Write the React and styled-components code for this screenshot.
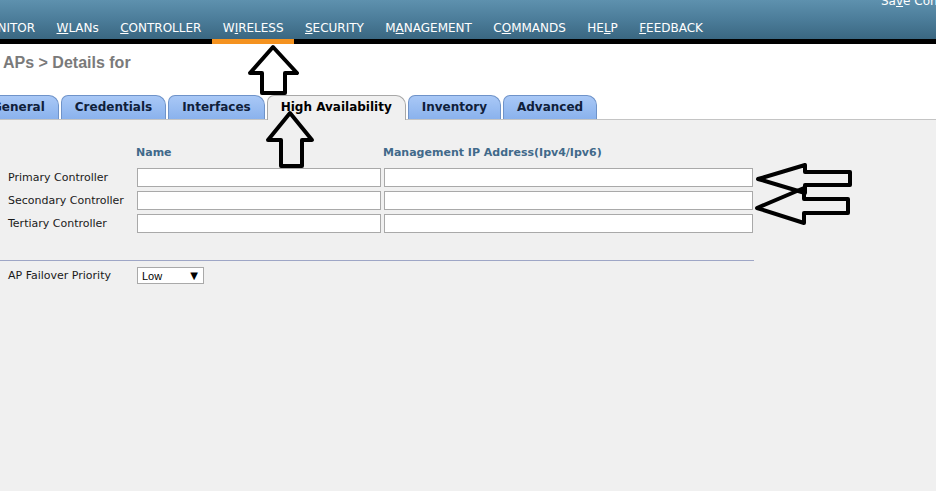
import React from "react";
import styled, { createGlobalStyle } from "styled-components";

const Global = createGlobalStyle`
  html, body { margin: 0; padding: 0; }
  body {
    background: #f0f0f0;
    font-family: "DejaVu Sans", Verdana, sans-serif;
    overflow: hidden;
  }
`;

const Page = styled.div`
  position: relative;
  width: 936px;
  height: 491px;
  overflow: hidden;
  display: flex;
  flex-direction: column;
  background: #f0f0f0;
`;

const Header = styled.header`
  height: 44px;
  flex: none;
  display: flex;
  flex-direction: column;
  overflow: hidden;
  background: linear-gradient(
    to bottom,
    #5e91ae 0px,
    #4b7c99 20px,
    #3a6781 39px,
    #000 39px,
    #000 44px
  );
`;

const TopLinks = styled.div`
  height: 7px;
  flex: none;
  display: flex;
  align-items: flex-end;
  padding-left: 881px;
  white-space: nowrap;
  overflow: hidden;
  color: #fff;
  font-size: 12px;
  line-height: 12px;
`;

const Nav = styled.nav`
  display: flex;
  margin-left: -33px;
  white-space: nowrap;
`;

const NavItem = styled.div`
  height: 37px;
  box-sizing: border-box;
  padding: 15px 10.7px 0;
  font-size: 12px;
  line-height: 12px;
  color: #fff;
  border-bottom: 5px solid ${(p) => (p.$active ? "#f4921f" : "transparent")};
  u { text-underline-offset: 1px; }
`;

const TopSection = styled.section`
  background: #fff;
  flex: none;
  display: flex;
  flex-direction: column;
`;

const Title = styled.h1`
  margin: 0;
  height: 51px;
  box-sizing: border-box;
  padding: 9px 0 0 3px;
  font-family: "Liberation Sans", Arial, sans-serif;
  font-weight: bold;
  font-size: 16px;
  line-height: 20px;
  color: #7a7a7a;
`;

const TabRow = styled.div`
  display: flex;
  align-items: flex-end;
  gap: 2px;
  height: 24px;
  margin-left: -22px;
  border-bottom: 1px solid #c4c4c4;
  background: #fff;
`;

const Tab = styled.div`
  height: ${(p) => (p.$active ? "25px" : "24px")};
  margin-bottom: ${(p) => (p.$active ? "-1px" : "0")};
  box-sizing: border-box;
  padding: 0 13px;
  border: 1px solid ${(p) => (p.$active ? "#a8a8a8" : "#6f93c9")};
  border-bottom: none;
  border-radius: 7px 10px 0 0;
  background: ${(p) =>
    p.$active ? "#f0f0f0" : "linear-gradient(to bottom, #a9c8f6, #8ab2ed)"};
  font-weight: bold;
  font-size: 12px;
  line-height: 22px;
  color: ${(p) => (p.$active ? "#000" : "#10203a")};
  white-space: nowrap;
`;

const Content = styled.main`
  flex: 1;
  background: #f0f0f0;
  padding-top: 26px;
`;

const FormGrid = styled.div`
  display: grid;
  grid-template-columns: 129px 247px 369px;
  row-gap: 4px;
  align-items: center;
  padding-left: 8px;
`;

const ColHead = styled.div`
  font-weight: bold;
  font-size: 11px;
  line-height: 14px;
  color: #41698a;
  margin-left: -1px;
  margin-bottom: 4px;
  white-space: nowrap;
`;

const Label = styled.div`
  font-size: 11px;
  line-height: 14px;
  color: #1a1a1a;
  white-space: nowrap;
`;

const TextBox = styled.div`
  width: ${(p) => p.$w}px;
  height: 19px;
  box-sizing: border-box;
  border: 1px solid #a9a9a9;
  background: #fff;
`;

const Divider = styled.hr`
  width: 754px;
  margin: 27px 0 0 0;
  border: none;
  border-top: 1px solid #9ea6c6;
  height: 0;
`;

const FieldRow = styled.div`
  display: flex;
  align-items: center;
  margin-top: 6px;
  padding-left: 8px;
`;

const FieldLabel = styled(Label)`
  width: 129px;
`;

const Select = styled.div`
  width: 67px;
  height: 17px;
  box-sizing: border-box;
  border: 1px solid #a9a9a9;
  background: #fff;
  display: flex;
  align-items: center;
  justify-content: space-between;
  padding: 0 5px 0 4px;
  font-family: "Liberation Sans", Arial, sans-serif;
  font-size: 11px;
  color: #000;
`;

const Caret = styled.span`
  font-family: "DejaVu Sans", sans-serif;
  font-size: 10px;
  line-height: 10px;
`;

const Overlay = styled.svg`
  position: absolute;
  top: 0;
  left: 0;
  pointer-events: none;
`;

const navItems = [
  { pre: "", u: "M", post: "ONITOR" },
  { pre: "", u: "W", post: "LANs" },
  { pre: "", u: "C", post: "ONTROLLER" },
  { pre: "W", u: "I", post: "RELESS", active: true },
  { pre: "", u: "S", post: "ECURITY" },
  { pre: "M", u: "A", post: "NAGEMENT" },
  { pre: "C", u: "O", post: "MMANDS" },
  { pre: "HE", u: "L", post: "P" },
  { pre: "", u: "F", post: "EEDBACK" },
];

const tabs = [
  "General",
  "Credentials",
  "Interfaces",
  "High Availability",
  "Inventory",
  "Advanced",
];

const rows = ["Primary Controller", "Secondary Controller", "Tertiary Controller"];

const arrows = [
  "273,47 297,73 285,73 285,93 262,93 262,73 250,73",
  "290,113 312,140 302,140 302,166 281,166 281,140 268,140",
  "758,179 805,165 805,172 850,172 850,185 805,185 805,193",
  "757,208 804,188 804,199 848,199 848,213 804,213 804,223",
];

export default function App() {
  return (
    <Page>
      <Global />
      <Header>
        <TopLinks>
          <span>
            Sa<u>v</u>e Configuration
          </span>
        </TopLinks>
        <Nav>
          {navItems.map((n, i) => (
            <NavItem key={i} $active={n.active}>
              {n.pre}
              <u>{n.u}</u>
              {n.post}
            </NavItem>
          ))}
        </Nav>
      </Header>
      <TopSection>
        <Title>APs &gt; Details for</Title>
        <TabRow>
          {tabs.map((t) => (
            <Tab key={t} $active={t === "High Availability"}>
              {t}
            </Tab>
          ))}
        </TabRow>
      </TopSection>
      <Content>
        <FormGrid>
          <span />
          <ColHead>Name</ColHead>
          <ColHead>Management IP Address(Ipv4/Ipv6)</ColHead>
          {rows.map((r) => (
            <React.Fragment key={r}>
              <Label>{r}</Label>
              <TextBox $w={244} />
              <TextBox $w={369} />
            </React.Fragment>
          ))}
        </FormGrid>
        <Divider />
        <FieldRow>
          <FieldLabel>AP Failover Priority</FieldLabel>
          <Select>
            <span>Low</span>
            <Caret>▼</Caret>
          </Select>
        </FieldRow>
      </Content>
      <Overlay width="936" height="491" viewBox="0 0 936 491">
        {arrows.map((pts, i) => (
          <polygon
            key={i}
            points={pts}
            fill="none"
            stroke="#000"
            strokeWidth="4"
            strokeLinejoin="round"
          />
        ))}
      </Overlay>
    </Page>
  );
}
